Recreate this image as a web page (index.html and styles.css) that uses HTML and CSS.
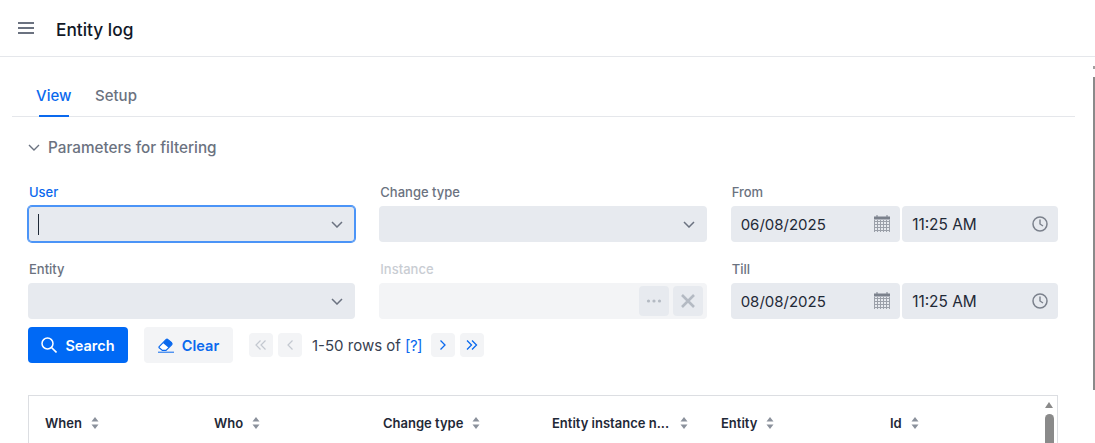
FILE: index.html
```html
<!DOCTYPE html>
<html lang="en">
<head>
<meta charset="utf-8">
<title>Entity log</title>
<link rel="stylesheet" href="styles.css">
</head>
<body>
<header class="topbar">
  <svg class="menu-icon" width="16" height="12" viewBox="0 0 16 12"><path d="M0 1h16M0 6h16M0 11h16" stroke="#6b7280" stroke-width="2" fill="none"/></svg>
  <h1 class="title">Entity log</h1>
</header>
<main class="content">
  <nav class="tabs">
    <a class="tab tab-active">View</a>
    <a class="tab">Setup</a>
  </nav>
  <div class="section-head">
    <svg width="12" height="7" viewBox="0 0 12 7"><path d="M1 1l5 5 5-5" stroke="#6b7280" stroke-width="1.4" fill="none"/></svg>
    <span>Parameters for filtering</span>
  </div>
  <div class="form-grid">
    <div class="field">
      <label class="label label-focus">User</label>
      <div class="input input-focus"><span class="caret"></span>
        <svg class="chev" width="12" height="7" viewBox="0 0 12 7"><path d="M1 1l5 5 5-5" stroke="#6b7280" stroke-width="1.5" fill="none"/></svg></div>
    </div>
    <div class="field">
      <label class="label">Change type</label>
      <div class="input">
        <svg class="chev" width="12" height="7" viewBox="0 0 12 7"><path d="M1 1l5 5 5-5" stroke="#6b7280" stroke-width="1.5" fill="none"/></svg></div>
    </div>
    <div class="field">
      <label class="label">From</label>
      <div class="datetime">
        <div class="input date">06/08/2025
          <svg class="cal" width="16" height="17" viewBox="0 0 16 17"><path d="M0 1.5h16v3H0z" fill="#7b818c"/><path d="M3 0v2M13 0v2" stroke="#7b818c" stroke-width="1"/><path d="M.5 5v12M3.500 5v12M6.500 5v12M9.500 5v12M12.500 5v12M15.500 5v12M0 6.500h16M0 9.500h16M0 12.500h16M0 15.500h16" stroke="#7b818c" stroke-width="1" opacity=".7"/></svg></div>
        <div class="input time">11:25 AM
          <svg class="clock" width="16" height="16" viewBox="0 0 16 16"><circle cx="8" cy="8" r="7" stroke="#7b818c" stroke-width="1.500" fill="none"/><path d="M8 3.500V8l3 2" stroke="#7b818c" stroke-width="1.400" fill="none"/></svg></div>
      </div>
    </div>
    <div class="field">
      <label class="label">Entity</label>
      <div class="input">
        <svg class="chev" width="12" height="7" viewBox="0 0 12 7"><path d="M1 1l5 5 5-5" stroke="#6b7280" stroke-width="1.5" fill="none"/></svg></div>
    </div>
    <div class="field">
      <label class="label label-off">Instance</label>
      <div class="input input-off">
        <span class="mini-btn"><svg width="16" height="4" viewBox="0 0 16 4"><g fill="#b4bac3"><circle cx="2.500" cy="2" r="1.600"/><circle cx="8" cy="2" r="1.600"/><circle cx="13.500" cy="2" r="1.600"/></g></svg></span>
        <span class="mini-btn"><svg width="14" height="14" viewBox="0 0 14 14"><path d="M1 1l12 12M13 1L1 13" stroke="#b4bac3" stroke-width="2.600" fill="none"/></svg></span>
      </div>
    </div>
    <div class="field">
      <label class="label">Till</label>
      <div class="datetime">
        <div class="input date">08/08/2025
          <svg class="cal" width="16" height="17" viewBox="0 0 16 17"><path d="M0 1.500h16v3H0z" fill="#7b818c"/><path d="M3 0v2M13 0v2" stroke="#7b818c" stroke-width="1"/><path d="M.5 5v12M3.500 5v12M6.500 5v12M9.500 5v12M12.500 5v12M15.500 5v12M0 6.500h16M0 9.500h16M0 12.500h16M0 15.500h16" stroke="#7b818c" stroke-width="1" opacity=".7"/></svg></div>
        <div class="input time">11:25 AM
          <svg class="clock" width="16" height="16" viewBox="0 0 16 16"><circle cx="8" cy="8" r="7" stroke="#7b818c" stroke-width="1.500" fill="none"/><path d="M8 3.500V8l3 2" stroke="#7b818c" stroke-width="1.400" fill="none"/></svg></div>
      </div>
    </div>
  </div>
  <div class="actions">
    <button class="btn btn-primary">
      <svg width="16" height="16" viewBox="0 0 16 16"><circle cx="6.500" cy="6.500" r="5.500" stroke="#fff" stroke-width="1.500" fill="none"/><path d="M10.500 10.500L15.500 15.500" stroke="#fff" stroke-width="1.600"/></svg>
      Search</button>
    <button class="btn btn-light">
      <svg width="16" height="15" viewBox="0 0 16 15"><path d="M1.200 8.600L8 1.600c.6-.6 1.400-.6 2 0l3.600 3.200c.6.6.6 1.400 0 2L8 12.400H4.400L1.200 9.800c-.3-.4-.3-.8 0-1.200z" fill="#fff" stroke="#0a69ee" stroke-width="1.200"/><path d="M5 5l5.600 4.800 3-3c.6-.6.6-1.400 0-2L10 1.600c-.6-.6-1.400-.6-2 0z" fill="#0a69ee"/><path d="M0 14.200h16" stroke="#0a69ee" stroke-width="1"/></svg>
      Clear</button>
    <div class="pager">
      <span class="page-btn page-off"><svg width="12" height="10" viewBox="0 0 12 10"><path d="M5.500 .5L1 5l4.500 4.500M10.500 .5L6 5l4.500 4.500" stroke="#c3c8d0" stroke-width="1.200" fill="none"/></svg></span>
      <span class="page-btn page-off"><svg width="6" height="10" viewBox="0 0 6 10"><path d="M5.500 .5L1 5l4.500 4.500" stroke="#c3c8d0" stroke-width="1.200" fill="none"/></svg></span>
      <span class="rows">1-50 rows of <a class="link">[?]</a></span>
      <span class="page-btn"><svg width="6" height="10" viewBox="0 0 6 10"><path d="M.5 .5L5 5 .5 9.500" stroke="#0a69ee" stroke-width="1.300" fill="none"/></svg></span>
      <span class="page-btn"><svg width="12" height="10" viewBox="0 0 12 10"><path d="M1 .5L5.500 5 1 9.500M6 .5L10.500 5 6 9.500" stroke="#0a69ee" stroke-width="1.300" fill="none"/></svg></span>
    </div>
  </div>
  <div class="table">
    <div class="thead">
      <div class="th">When <svg class="sort" width="8" height="12" viewBox="0 0 8 12"><path d="M4 0l3.500 4.500H.5zM4 12L.5 7.500h7z" fill="#8b919c"/></svg></div>
      <div class="th">Who <svg class="sort" width="8" height="12" viewBox="0 0 8 12"><path d="M4 0l3.500 4.500H.5zM4 12L.5 7.500h7z" fill="#8b919c"/></svg></div>
      <div class="th">Change type <svg class="sort" width="8" height="12" viewBox="0 0 8 12"><path d="M4 0l3.500 4.500H.5zM4 12L.5 7.500h7z" fill="#8b919c"/></svg></div>
      <div class="th">Entity instance n... <svg class="sort sort-far" width="8" height="12" viewBox="0 0 8 12"><path d="M4 0l3.500 4.500H.5zM4 12L.5 7.500h7z" fill="#8b919c"/></svg></div>
      <div class="th">Entity <svg class="sort" width="8" height="12" viewBox="0 0 8 12"><path d="M4 0l3.500 4.500H.5zM4 12L.5 7.500h7z" fill="#8b919c"/></svg></div>
      <div class="th">Id <svg class="sort" width="8" height="12" viewBox="0 0 8 12"><path d="M4 0l3.500 4.500H.5zM4 12L.5 7.500h7z" fill="#8b919c"/></svg></div>
    </div>
    <div class="tscroll"><span class="tscroll-up"></span><span class="tscroll-thumb"></span></div>
  </div>
</main>
<div class="page-scroll"></div>
</body>
</html>
```
FILE: styles.css
```css
html, body {
  margin: 0;
  height: 443px;
  overflow: hidden;
  background: #fff;
  font-family: Inter, "Liberation Sans", sans-serif;
  color: #1f2937;
}
* { box-sizing: border-box; }
.topbar {
  display: flex;
  align-items: center;
  height: 57px;
  padding-left: 18px;
  border-bottom: 1px solid #e5e7eb;
}
.menu-icon { margin-top: -1px; }
.title {
  margin: 2px 0 0 22px;
  font-size: 17.300px;
  font-weight: 500;
  color: #111827;
}
.content { padding: 0 20px 0 12px; position: relative; }
.tabs {
  display: flex;
  gap: 23.600px;
  height: 60px;
  padding: 0 0 0 24px;
  border-bottom: 1px solid #e5e7eb;
}
.tab {
  position: relative;
  font-size: 15px;
  font-weight: 500;
  color: #6b7280;
  padding-top: 30px;
  line-height: 18px;
}
.tab-active { color: #0a69ee; }
.tab-active::after {
  content: "";
  position: absolute;
  left: 3px;
  right: 2px;
  bottom: -1px;
  height: 2px;
  background: #0a69ee;
}
.section-head {
  display: flex;
  align-items: center;
  gap: 8px;
  height: 20px;
  margin: 20px 0 0 16px;
  font-size: 15.270px;
  font-weight: 500;
  color: #6b7280;
}
.form-grid {
  display: grid;
  grid-template-columns: repeat(3, 1fr);
  column-gap: 24px;
  row-gap: 18px;
  margin: 26px 17px 0 16px;
}
.label {
  display: block;
  height: 18px;
  margin-bottom: 5px;
  padding-left: 1px;
  font-size: 13px;
  line-height: 18px;
  font-weight: 500;
  color: #6b7280;
}
.label-focus { color: #0a69ee; }
.label-off { color: #c9cdd3; }
.input {
  display: flex;
  align-items: center;
  position: relative;
  height: 36px;
  border-radius: 4px;
  background: #e7eaef;
  font-size: 15px;
  font-weight: 400;
  color: #1f2937;
}
.input-focus {
  box-shadow: 0 0 0 1px #4b94f7, inset 0 0 0 1px #4b94f7;
  padding-left: 10px;
}
.caret { width: 1px; height: 21px; background: #1f2937; }
.chev { position: absolute; right: 12px; top: 15px; }
.input-off {
  background: #f3f4f6;
  justify-content: flex-end;
  gap: 4px;
  padding-right: 4px;
}
.mini-btn {
  display: flex;
  align-items: center;
  justify-content: center;
  width: 30px;
  height: 30px;
  border-radius: 4px;
  background: #e7eaef;
}
.datetime { display: flex; gap: 2px; }
.date { flex: 0 0 169.500px; padding: 1px 0 0 10px; }
.time { flex: 1; padding: 1px 0 0 10px; font-size: 15.400px; }
.cal { position: absolute; right: 10px; top: 9px; }
.clock { position: absolute; right: 10px; top: 10px; }
.actions {
  display: flex;
  align-items: center;
  margin: 8px 0 0 16px;
}
.btn {
  display: flex;
  align-items: center;
  justify-content: center;
  gap: 8px;
  height: 36px;
  padding: 0;
  border: 0;
  border-radius: 4px;
  font: 600 14.500px Inter, "Liberation Sans", sans-serif;
}
.btn-primary { width: 100px; background: #0069f5; color: #fff; }
.btn-light { width: 89px; margin-left: 16px; background: #f3f4f6; color: #0a69ee; }
.pager {
  display: flex;
  align-items: center;
  gap: 5px;
  margin-left: 16px;
}
.page-btn {
  display: flex;
  align-items: center;
  justify-content: center;
  width: 24px;
  height: 24px;
  border-radius: 4px;
  background: #f3f4f6;
}
.rows {
  width: 119px;
  padding-left: 5px;
  font-size: 15px;
  color: #374151;
  white-space: nowrap;
}
.link { color: #0a69ee; letter-spacing: -.6px; }
.table {
  position: relative;
  height: 48px;
  margin: 32px 17px 0 16px;
  border: 1px solid #dcdee2;
  border-bottom: 0;
}
.thead {
  display: grid;
  grid-template-columns: repeat(6, 169px);
  padding: 18px 0 0 16px;
}
.th {
  display: flex;
  align-items: center;
  gap: 8px;
  height: 18px;
  font-size: 13px;
  font-weight: 600;
  color: #1f2937;
  white-space: nowrap;
}
.sort { margin-left: 1px; }
.sort-far { margin-left: 3px; }
.tscroll {
  position: absolute;
  top: 0;
  right: 0;
  width: 20px;
  height: 100%;
}
.tscroll-up {
  position: absolute;
  top: 6px;
  left: 8px;
  border-left: 4.500px solid transparent;
  border-right: 4.500px solid transparent;
  border-bottom: 6px solid #8a8a8a;
}
.tscroll-thumb {
  position: absolute;
  top: 18px;
  left: 8px;
  width: 9px;
  height: 29px;
  border-radius: 5px 5px 0 0;
  background: #8a8a8a;
}
.page-scroll {
  position: absolute;
  top: 77px;
  right: 0;
  width: 2px;
  height: 313px;
  background: #8a8a8a;
}
.page-scroll::before {
  content: "";
  position: absolute;
  top: -11px;
  left: 0;
  width: 2px;
  height: 3px;
  background: #a0a0a0;
}
```
